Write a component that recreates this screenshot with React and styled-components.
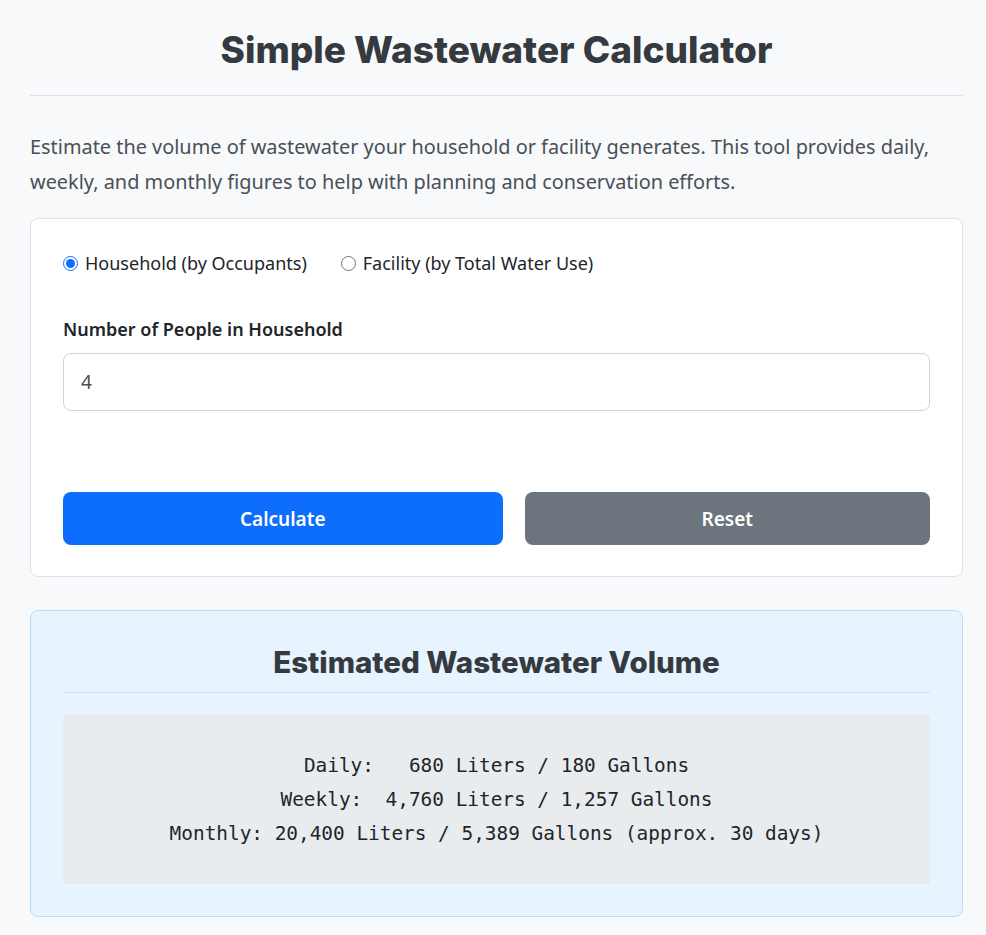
import React, { useState } from 'react';
import styled, { createGlobalStyle } from 'styled-components';

const GlobalStyle = createGlobalStyle`
  html, body {
    margin: 0;
    padding: 0;
    background: #f8f9fa;
  }
  body {
    font-family: "Noto Sans", "Open Sans", sans-serif;
    color: #212529;
  }
`;

const Page = styled.div`
  padding: 26px 23px 18px 30px;
`;

const Title = styled.h1`
  margin: 0;
  padding-bottom: 21px;
  border-bottom: 1px solid #dee2e6;
  text-align: center;
  font-family: Inter, "Noto Sans", sans-serif;
  font-weight: 800;
  font-size: 37px;
  line-height: 48px;
  color: #343a40;
`;

const Intro = styled.p`
  margin: 33px 0 19px;
  font-size: 19.9px;
  line-height: 35px;
  color: #495057;
`;

const Card = styled.section`
  background: #fff;
  border: 1px solid #dee2e6;
  border-radius: 8px;
  padding: 32px 32px 31px;
`;

const RadioRow = styled.div`
  display: flex;
  gap: 34px;
  align-items: center;
`;

const RadioLabel = styled.label`
  display: flex;
  align-items: center;
  gap: 7px;
  font-size: 18px;
  line-height: 25px;
  color: #212529;
  cursor: pointer;
  input {
    margin: 0;
    width: 15px;
    height: 15px;
    accent-color: #0d6efd;
  }
`;

const Field = styled.div`
  margin-top: 41px;
  margin-bottom: 81px;
`;

const FieldLabel = styled.label`
  display: block;
  font-size: 18px;
  line-height: 25px;
  font-weight: 600;
  color: #212529;
  margin-bottom: 11px;
`;

const TextInput = styled.input`
  box-sizing: border-box;
  width: 100%;
  height: 58px;
  padding: 0 17px;
  font-family: "Noto Sans", sans-serif;
  font-size: 19px;
  color: #495057;
  border: 1px solid #ced4da;
  border-radius: 8px;
  background: #fff;
  outline: none;
`;

const ButtonRow = styled.div`
  display: flex;
  gap: 22px;
`;

const Button = styled.button`
  flex: 1 1 auto;
  height: 53px;
  border: none;
  border-radius: 8px;
  font-family: "Noto Sans", sans-serif;
  font-size: 19px;
  font-weight: 600;
  color: #fff;
  background: ${p => (p.$variant === 'secondary' ? '#6c757d' : '#0d6efd')};
  cursor: pointer;
`;

const ResultCard = styled.section`
  margin-top: 33px;
  background: #e7f3fe;
  border: 1px solid #b9dcf5;
  border-radius: 8px;
  padding: 32px 32px 32px;
`;

const ResultTitle = styled.h2`
  margin: 0;
  padding-bottom: 11px;
  border-bottom: 1px solid #cfe2f3;
  text-align: center;
  font-family: Inter, "Noto Sans", sans-serif;
  font-weight: 800;
  font-size: 29.5px;
  line-height: 38px;
  color: #343a40;
`;

const ResultBox = styled.pre`
  margin: 22px 0 0;
  padding: 34px 0 33px;
  background: #e9ecef;
  text-align: center;
  font-family: "DejaVu Sans Mono", "Liberation Mono", monospace;
  font-size: 19.4px;
  line-height: 34px;
  color: #212529;
`;

export default function App() {
  const [mode, setMode] = useState('household');
  const [people, setPeople] = useState('4');

  return (
    <Page>
      <GlobalStyle />
      <Title>Simple Wastewater Calculator</Title>
      <Intro>
        Estimate the volume of wastewater your household or facility generates. This tool provides daily,
        weekly, and monthly figures to help with planning and conservation efforts.
      </Intro>
      <Card>
        <RadioRow>
          <RadioLabel>
            <input type="radio" name="mode" checked={mode === 'household'} onChange={() => setMode('household')} />
            Household (by Occupants)
          </RadioLabel>
          <RadioLabel>
            <input type="radio" name="mode" checked={mode === 'facility'} onChange={() => setMode('facility')} />
            Facility (by Total Water Use)
          </RadioLabel>
        </RadioRow>
        <Field>
          <FieldLabel htmlFor="people">Number of People in Household</FieldLabel>
          <TextInput id="people" value={people} onChange={e => setPeople(e.target.value)} />
        </Field>
        <ButtonRow>
          <Button>Calculate</Button>
          <Button $variant="secondary">Reset</Button>
        </ButtonRow>
      </Card>
      <ResultCard>
        <ResultTitle>Estimated Wastewater Volume</ResultTitle>
        <ResultBox>
{`Daily:   680 Liters / 180 Gallons
Weekly:  4,760 Liters / 1,257 Gallons
Monthly: 20,400 Liters / 5,389 Gallons (approx. 30 days)`}
        </ResultBox>
      </ResultCard>
    </Page>
  );
}
